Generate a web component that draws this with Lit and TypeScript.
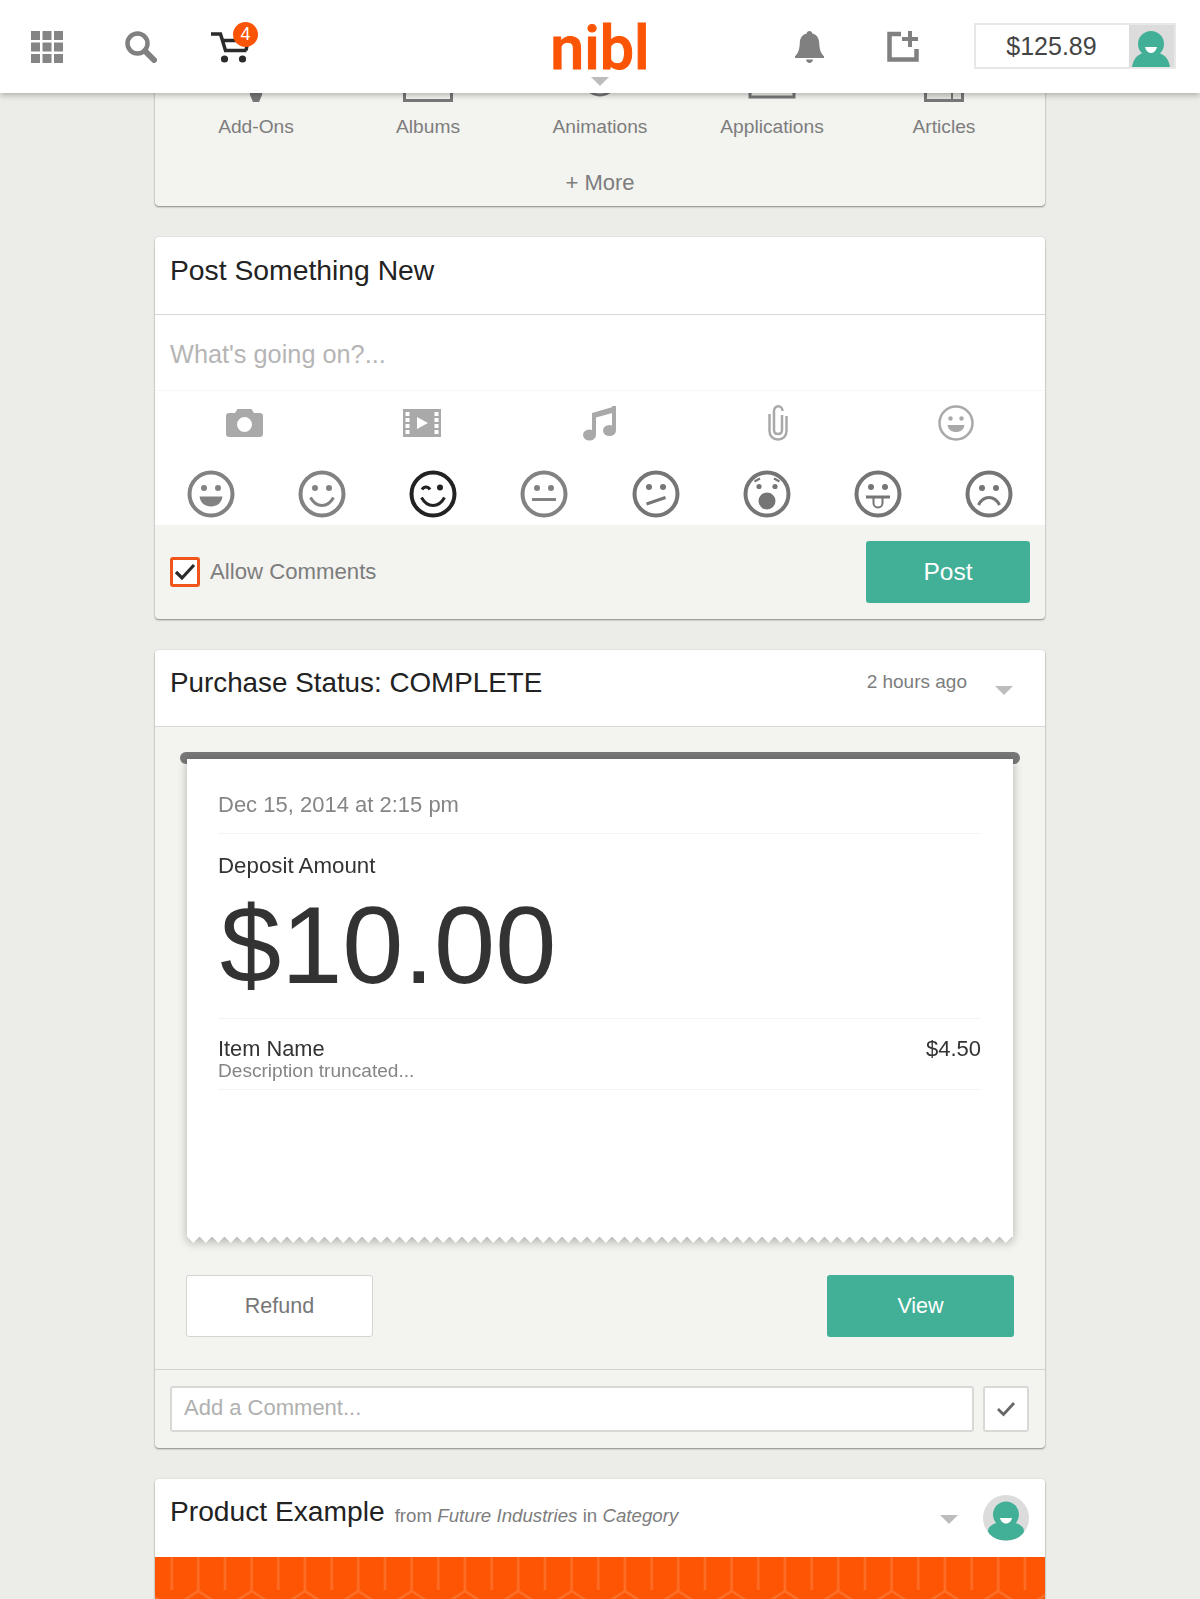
import { LitElement, html, css, svg } from "lit";
import { customElement } from "lit/decorators.js";

const faces = [
  { color: "#828282", inner: svg`<circle cx="17" cy="18" r="3"/><circle cx="31" cy="18" r="3"/><path d="M12.500 26.500h23c-.8 6.500-5.500 10-11.500 10s-10.700-3.500-11.500-10z"/>` },
  { color: "#828282", inner: svg`<circle cx="17" cy="18" r="3"/><circle cx="31" cy="18" r="3"/><path class="ln" d="M12.500 27.500c3 5.500 7 8 11.500 8s8.500-2.500 11.500-8"/>` },
  { color: "#222", inner: svg`<path class="ln" d="M13 19.500c2.200-3.500 5.800-3.500 8 0"/><circle cx="31" cy="17.500" r="3"/><path class="ln" d="M12.500 27.500c3 5.500 7 8 11.500 8s8.500-2.500 11.500-8"/>` },
  { color: "#828282", inner: svg`<circle cx="17" cy="18" r="3"/><circle cx="31" cy="18" r="3"/><path class="ln" d="M12 29.500h24"/>` },
  { color: "#757575", inner: svg`<circle cx="17" cy="17" r="3"/><circle cx="31" cy="17" r="3"/><path class="ln" d="M14.500 34l19-6.500"/>` },
  { color: "#757575", inner: svg`<circle cx="16" cy="16.500" r="2.600"/><circle cx="32" cy="16.500" r="2.600"/><path class="thin" d="M11.500 11.500l5.500-3M36.500 11.500l-5.500-3"/><circle cx="24" cy="31" r="8.500"/>` },
  { color: "#757575", inner: svg`<circle cx="17" cy="17" r="3"/><circle cx="31" cy="17" r="3"/><path class="ln" d="M12 27h24"/><path class="thin" d="M19.500 28v5c0 6 9 6 9 0v-5"/>` },
  { color: "#757575", inner: svg`<circle cx="17" cy="18" r="3"/><circle cx="31" cy="18" r="3"/><path class="ln" d="M13.500 35c2.500-5 6.300-7.500 10.500-7.500s8 2.500 10.500 7.500"/>` },
];

@customElement("app-root")
export class AppRoot extends LitElement {
  static styles = css`
    :host { display: block; position: relative; width: 1200px; height: 1599px; overflow: hidden; background: #ecece8; font-family: "Liberation Sans", Arial, sans-serif; color: #222; }
    svg { display: block; }
    .top { position: absolute; z-index: 5; top: 0; left: 0; right: 0; height: 93px; background: #fff; box-shadow: 0 2px 6px rgba(0,0,0,.28); display: flex; align-items: center; }
    .left, .right { flex: 1 1 0; display: flex; align-items: center; }
    .right { justify-content: flex-end; }
    .grid-icon { margin-left: 31px; }
    .search { margin-left: 62px; }
    .cart { margin-left: 53px; position: relative; }
    .badge { position: absolute; left: 23px; top: -8px; width: 25px; height: 25px; border-radius: 50%; background: #fb5405; color: #fff; font-size: 18px; line-height: 25px; text-align: center; }
    .logo { font-family: Roboto, sans-serif; font-weight: 500; font-size: 61px; line-height: 70px; letter-spacing: 0; color: #fb5405; -webkit-text-stroke: 1px #fb5405; padding-top: 2px; }
    .logo-caret { position: absolute; left: 591px; top: 77px; width: 0; height: 0; border-left: 9px solid transparent; border-right: 9px solid transparent; border-top: 9px solid #bdbdbd; }
    .newpost { margin-left: 63px; }
    .balance { margin: 0 24px 2px 55px; width: 202px; height: 46px; box-sizing: border-box; border: 2px solid #e8e8e8; display: flex; }
    .amount-box { flex: 1; text-align: center; padding-right: 2px; font-size: 25px; line-height: 43px; color: #444; }
    .balance .avatar { width: 45px; background: #dcdcdc; }

    main { padding-top: 40px; width: 890px; margin: 0 auto; display: flex; flex-direction: column; gap: 31px; }
    .card { border-radius: 4px; background: #f3f3ef; box-shadow: 0 1px 2px rgba(0,0,0,.42), 0 0 1px rgba(0,0,0,.2); overflow: hidden; flex: none; }
    .cats { display: grid; grid-template-columns: repeat(5, 172px); padding: 22px 15px 0; }
    .cat { display: flex; flex-direction: column; align-items: center; }
    .cat span { margin-top: 14px; font-size: 19.200px; line-height: 22px; color: #7d7d7d; }
    .more { margin-top: 30px; padding-bottom: 8px; text-align: center; font-size: 22px; line-height: 30px; color: #7d7d7d; }

    .head { height: 78px; box-sizing: border-box; background: #fff; border-bottom: 1.500px solid #d8d8d4; display: flex; align-items: center; padding: 0 15px 11px; }
    .title { font-size: 27.800px; line-height: 34px; color: #222; }
    .post-title { font-size: 28.300px; }
    .input { height: 76px; background: #fff; border-bottom: 1px solid #f6f6f4; display: flex; align-items: center; padding: 4px 15px 0; box-sizing: border-box; font-size: 25.300px; color: #b5b5b5; }
    .attach { background: #fff; display: grid; grid-template-columns: repeat(5, 1fr); height: 79px; align-items: center; justify-items: center; padding-bottom: 15px; box-sizing: border-box; }
    .faces { background: #fff; display: grid; grid-template-columns: repeat(8, 1fr); justify-items: center; height: 55px; }
    .faces svg { fill: var(--c); }
    .faces .ln { fill: none; stroke: var(--c); stroke-width: 3; }
    .faces .thin { fill: none; stroke: var(--c); stroke-width: 2; }
    .foot { height: 94px; display: flex; align-items: center; justify-content: space-between; padding: 0 15px; }
    .check { display: flex; align-items: center; gap: 10px; font-size: 22.200px; color: #7d7d7d; }
    .box { width: 30px; height: 30px; box-sizing: border-box; border: 3px solid #f0551c; border-radius: 3px; background: #fff; display: flex; align-items: center; justify-content: center; }
    .btn { width: 164px; height: 62px; border-radius: 3px; background: #42b097; color: #fff; font-size: 24.500px; display: flex; align-items: center; justify-content: center; }

    .status-head { height: 77px; justify-content: space-between; padding: 0 32px 10px 15px; }
    .status-right { display: flex; align-items: center; gap: 28px; margin-top: -2px; font-size: 19px; color: #7d7d7d; }
    .caret { width: 0; height: 0; border-left: 9px solid transparent; border-right: 9px solid transparent; border-top: 9px solid #bdbdbd; margin-top: 17px; }
    .body { padding: 25px 25px 32px; border-bottom: 1.500px solid #d2d2ce; }
    .roll { height: 12px; border-radius: 6px; background: #777; margin-bottom: -5px; }
    .paper-wrap { margin: 0 7px; filter: drop-shadow(0 2px 5px rgba(0,0,0,.28)); position: relative; }
    .paper { height: 484px; box-sizing: border-box; background: #fff; padding: 0 32px 0 31px;
      -webkit-mask: linear-gradient(#000 0 0) top / 100% calc(100% - 6px) no-repeat, conic-gradient(from -45deg at 50% 100%, #000 90deg, transparent 0) bottom left / 12.500px 6.250px repeat-x;
      mask: linear-gradient(#000 0 0) top / 100% calc(100% - 6px) no-repeat, conic-gradient(from -45deg at 50% 100%, #000 90deg, transparent 0) bottom left / 12.500px 6.250px repeat-x; }
    .date { padding: 35px 0 17px; line-height: 22px; font-size: 22px; color: #858585; border-bottom: 1px solid #f3f3f1; }
    .dep { padding-top: 19px; font-size: 22.300px; line-height: 26px; color: #333; }
    .big { font-size: 110px; line-height: 120px; color: #333; padding: 6px 0 13px 2px; border-bottom: 1px solid #f3f3f1; }
    .item { display: flex; justify-content: space-between; padding: 18px 0 8px; border-bottom: 1px solid #f3f3f1; }
    .item-name { font-size: 21.800px; line-height: 24px; color: #333; }
    .item-desc { font-size: 19.100px; line-height: 20px; color: #858585; }
    .price { font-size: 22px; line-height: 24px; color: #333; }
    .actions { display: flex; justify-content: space-between; margin: 32px 6px 0 6px; }
    .actions .btn { width: 187px; font-size: 21.500px; }
    .refund { box-sizing: border-box; background: #fff; border: 1.500px solid #d4d4d0; color: #777; }
    .comment { display: flex; gap: 9px; padding: 16px 16px 16px 15px; }
    .comment-input { flex: 1; height: 46px; box-sizing: border-box; border: 2px solid #d8d8d4; border-radius: 3px; background: #fff; padding-left: 12px; font-size: 22px; line-height: 40px; color: #b0b0b0; }
    .comment-ok { width: 46px; height: 46px; box-sizing: border-box; border: 2px solid #d8d8d4; border-radius: 3px; background: #fff; display: flex; align-items: center; justify-content: center; }

    .prod-head { height: 78px; border-bottom: none; padding: 0 16px 0 15px; }
    .prod-head .title { font-size: 28.200px; padding-bottom: 14px; }
    .from { margin-left: 10px; padding-bottom: 4px; font-size: 18.700px; color: #7d7d7d; }
    .spacer { flex: 1; }
    .prod-head .caret { margin: 3px 25px 0 0; }
    .circle { width: 46px; height: 46px; border-radius: 50%; background: #dcdcdc; overflow: hidden; }
    .banner { height: 60px; background: #fd5503; }
  `;

  private avatar(round = false) {
    return round
      ? html`<div class="circle"><svg width="46" height="46" viewBox="0 0 46 46">
          <circle cx="23" cy="19.500" r="13" fill="#42b097"/>
          <ellipse cx="23" cy="36" rx="18" ry="9.500" fill="#42b097"/>
          <path d="M17 23h12c-1 4-3.500 5.500-6 5.500s-5-1.500-6-5.500z" fill="#fff"/>
        </svg></div>`
      : html`<div class="avatar"><svg width="45" height="42" viewBox="0 0 45 42">
          <circle cx="22" cy="19" r="13" fill="#42b097"/>
          <path d="M3 42c1-7 5-13 12-14h14c7 1 11 7 12 14z" fill="#42b097"/>
          <path d="M16 22h12c-1 4-3.500 6-6 6s-5-2-6-6z" fill="#fff"/>
        </svg></div>`;
  }

  render() {
    const grid = [0, 1, 2].flatMap((r) => [0, 1, 2].map((c) => svg`<rect x=${c * 11.5} y=${r * 11.5} width="9" height="9" fill="#858585"/>`));
    const icon = "#777";
    return html`
      <header class="top">
        <div class="left">
          <svg class="grid-icon" width="32" height="32" viewBox="0 0 32 32">${grid}</svg>
          <svg class="search" width="32" height="32" viewBox="0 0 32 32" fill="none" stroke="#808080">
            <circle cx="12.500" cy="12.500" r="10" stroke-width="4.500"/><path d="M20 20l9 9" stroke-width="6" stroke-linecap="round"/>
          </svg>
          <div class="cart">
            <svg width="40" height="34" viewBox="0 0 40 34" fill="none" stroke="#2b2b2b" stroke-width="3.500">
              <path d="M1 4h9.500L15.500 20.500h21"/><path d="M12 10.500h26l-2 10"/>
              <circle cx="14.500" cy="29" r="3.600" fill="#2b2b2b" stroke="none"/><circle cx="32.500" cy="29" r="3.600" fill="#2b2b2b" stroke="none"/>
            </svg>
            <div class="badge">4</div>
          </div>
        </div>
        <div class="logo">nibl</div>
        <div class="logo-caret"></div>
        <div class="right">
          <svg width="29" height="32" viewBox="0 0 29 32" fill="#808080">
            <path d="M14.500 0c1.700 0 2.700 1.100 2.800 2.600 4.600 1.100 6.700 4.700 6.900 9.400.3 6 1.200 9.800 4.800 13.300v1.700H0v-1.700c3.600-3.500 4.500-7.300 4.800-13.300.2-4.700 2.300-8.300 6.900-9.400C11.800 1.100 12.800 0 14.500 0z"/>
            <path d="M11 28.500h7c-.3 2.100-1.700 3.500-3.500 3.500S11.300 30.600 11 28.500z"/>
          </svg>
          <svg class="newpost" width="32" height="32" viewBox="0 0 32 32" fill="none" stroke="#808080" stroke-width="4.500">
            <path d="M14 3H2.500v25.500h27V18"/><path d="M23 0v16M15 8h16" stroke-width="4"/>
          </svg>
          <div class="balance"><div class="amount-box">$125.89</div>${this.avatar()}</div>
        </div>
      </header>
      <main>
        <section class="card">
          <div class="cats">
            <div class="cat">
              <svg width="50" height="40" viewBox="0 0 50 40" fill="${icon}"><path d="M19 28h12v5l-3 7h-6l-3-7z"/></svg><span>Add-Ons</span>
            </div>
            <div class="cat">
              <svg width="50" height="40" viewBox="0 0 50 40" fill="none" stroke="${icon}" stroke-width="3"><rect x="1.500" y="8" width="47" height="30.500"/></svg><span>Albums</span>
            </div>
            <div class="cat">
              <svg width="50" height="40" viewBox="0 0 50 40" fill="none" stroke="${icon}" stroke-width="3"><circle cx="25" cy="16" r="17"/></svg><span>Animations</span>
            </div>
            <div class="cat">
              <svg width="50" height="40" viewBox="0 0 50 40" fill="none" stroke="${icon}" stroke-width="3"><rect x="3" y="8" width="44" height="27"/></svg><span>Applications</span>
            </div>
            <div class="cat">
              <svg width="50" height="40" viewBox="0 0 50 40" fill="none" stroke="${icon}" stroke-width="3"><rect x="6.500" y="8" width="37" height="30.500" fill="#e4e4e0"/><path d="M33 31v7" stroke-width="2"/></svg><span>Articles</span>
            </div>
          </div>
          <div class="more">+ More</div>
        </section>

        <section class="card">
          <div class="head"><div class="title post-title">Post Something New</div></div>
          <div class="input">What's going on?...</div>
          <div class="attach">
            <svg width="37" height="28" viewBox="0 0 37 28" fill="#a9a9a9">
              <path fill-rule="evenodd" d="M3 4h6l2.500-4h14L28 4h6c1.700 0 3 1.300 3 3v18c0 1.700-1.300 3-3 3H3c-1.700 0-3-1.300-3-3V7c0-1.700 1.300-3 3-3zM18.500 8a7.500 7.500 0 1 0 0 15 7.500 7.500 0 0 0 0-15z"/>
            </svg>
            <svg width="38" height="28" viewBox="0 0 38 28">
              <rect width="38" height="28" fill="#a9a9a9"/>
              <g fill="#fff"><rect x="2.500" y="3" width="4" height="4"/><rect x="2.500" y="9" width="4" height="4"/><rect x="2.500" y="15" width="4" height="4"/><rect x="2.500" y="21" width="4" height="4"/>
              <rect x="31.500" y="3" width="4" height="4"/><rect x="31.500" y="9" width="4" height="4"/><rect x="31.500" y="15" width="4" height="4"/><rect x="31.500" y="21" width="4" height="4"/>
              <path d="M14 8l11 6-11 6z"/></g>
            </svg>
            <svg width="34" height="36" viewBox="0 0 34 36" fill="#a9a9a9">
              <path d="M9 8L33 1v6L13 12.500V29H9zM29 1h4v24h-4z"/><ellipse cx="6.500" cy="30" rx="6.500" ry="5.500"/><ellipse cx="26.500" cy="25.500" rx="6.500" ry="5.500"/>
            </svg>
            <svg width="22" height="36" viewBox="0 0 22 36" fill="none" stroke="#a9a9a9" stroke-width="2.500">
              <path d="M15 10v15c0 2.500-1.600 4-4 4s-4-1.500-4-4V6c0-2.800 1.800-4.700 4.200-4.700S15.500 3.200 15.500 6M19.500 11v15c0 5-3.500 8.500-8.500 8.500S2.500 31 2.500 26V9"/>
            </svg>
            <svg width="36" height="36" viewBox="0 0 36 36" fill="#a9a9a9">
              <circle cx="18" cy="18" r="16.500" fill="none" stroke="#a9a9a9" stroke-width="2.500"/>
              <circle cx="12.500" cy="13.500" r="2.200"/><circle cx="23.500" cy="13.500" r="2.200"/>
              <path d="M9.500 20h17c-.6 4.500-4 7-8.500 7s-7.900-2.500-8.500-7z"/>
            </svg>
          </div>
          <div class="faces">
            ${faces.map(
              (f) => html`<svg width="48" height="48" viewBox="0 0 48 48" style="--c:${f.color}">
                <circle cx="24" cy="24" r="21.500" fill="none" stroke=${f.color} stroke-width="4"/>${f.inner}
              </svg>`
            )}
          </div>
          <div class="foot">
            <div class="check">
              <div class="box">
                <svg width="22" height="18" viewBox="0 0 22 18" fill="none" stroke="#2b2b2b" stroke-width="3.200"><path d="M2 9l6 6L20 2"/></svg>
              </div>
              Allow Comments
            </div>
            <div class="btn">Post</div>
          </div>
        </section>

        <section class="card">
          <div class="head status-head">
            <div class="title">Purchase Status: COMPLETE</div>
            <div class="status-right"><span>2 hours ago</span><div class="caret"></div></div>
          </div>
          <div class="body">
            <div class="roll"></div>
            <div class="paper-wrap">
              <div class="paper">
                <div class="date">Dec 15, 2014 at 2:15 pm</div>
                <div class="dep">Deposit Amount</div>
                <div class="big">$10.00</div>
                <div class="item">
                  <div><div class="item-name">Item Name</div><div class="item-desc">Description truncated...</div></div>
                  <div class="price">$4.50</div>
                </div>
              </div>
            </div>
            <div class="actions">
              <div class="btn refund">Refund</div>
              <div class="btn">View</div>
            </div>
          </div>
          <div class="comment">
            <div class="comment-input">Add a Comment...</div>
            <div class="comment-ok">
              <svg width="20" height="16" viewBox="0 0 20 16" fill="none" stroke="#666" stroke-width="2.800"><path d="M2 8l5.500 5.500L18 2"/></svg>
            </div>
          </div>
        </section>

        <section class="card">
          <div class="head prod-head">
            <div class="title">Product Example</div>
            <div class="from">from <i>Future Industries</i> in <i>Category</i></div>
            <div class="spacer"></div>
            <div class="caret"></div>
            ${this.avatar(true)}
          </div>
          <div class="banner">
            <svg width="890" height="60" viewBox="0 0 890 60">
              <defs>
                <pattern id="hex" width="53.330" height="60" patternUnits="userSpaceOnUse" x="0" y="0">
                  <g fill="none" stroke="#fff" stroke-opacity=".15" stroke-width="2.500">
                    <path d="M16.700 0v33"/><path d="M43.300 0v34l-14 9M43.300 34l14 9"/><path d="M-10 34l-14 9M-10 34l14 9" />
                  </g>
                </pattern>
              </defs>
              <rect width="890" height="60" fill="url(#hex)"/>
            </svg>
          </div>
        </section>
      </main>
    `;
  }
}
